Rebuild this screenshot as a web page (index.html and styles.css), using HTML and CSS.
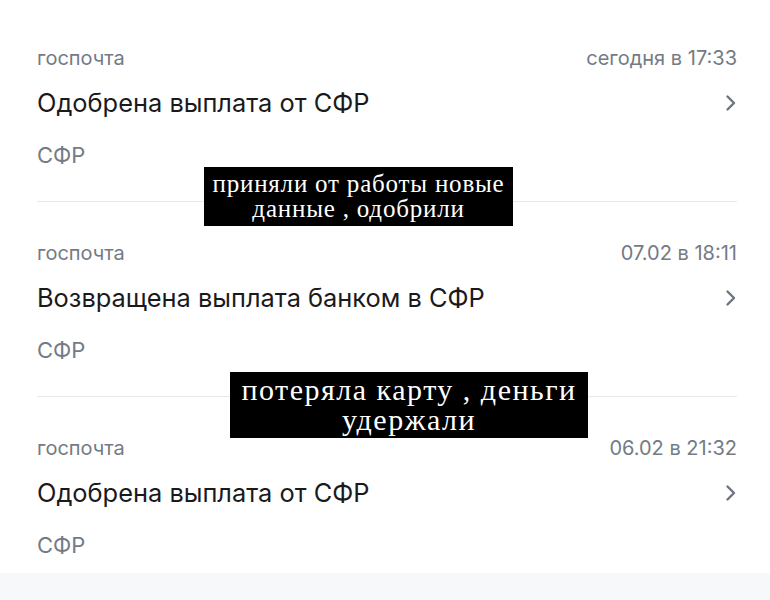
FILE: index.html
```html
<!DOCTYPE html>
<html lang="ru">
<head>
<meta charset="utf-8">
<link rel="stylesheet" href="styles.css">
</head>
<body>
<div class="page">
  <ul class="list">
    <li class="item">
      <div class="meta"><span>госпочта</span><span>сегодня в 17:33</span></div>
      <div class="title"><span>Одобрена выплата от СФР</span><svg class="chev" viewBox="0 0 12 18" width="12" height="18"><path d="M2.5 2.5 L9 9 L2.5 15.5" fill="none" stroke="currentColor" stroke-width="2.4" stroke-linecap="round" stroke-linejoin="round"/></svg></div>
      <div class="source">СФР</div>
    </li>
    <li class="item">
      <div class="meta"><span>госпочта</span><span>07.02 в 18:11</span></div>
      <div class="title"><span>Возвращена выплата банком в СФР</span><svg class="chev" viewBox="0 0 12 18" width="12" height="18"><path d="M2.5 2.5 L9 9 L2.5 15.5" fill="none" stroke="currentColor" stroke-width="2.4" stroke-linecap="round" stroke-linejoin="round"/></svg></div>
      <div class="source">СФР</div>
    </li>
    <li class="item last">
      <div class="meta"><span>госпочта</span><span>06.02 в 21:32</span></div>
      <div class="title"><span>Одобрена выплата от СФР</span><svg class="chev" viewBox="0 0 12 18" width="12" height="18"><path d="M2.5 2.5 L9 9 L2.5 15.5" fill="none" stroke="currentColor" stroke-width="2.4" stroke-linecap="round" stroke-linejoin="round"/></svg></div>
      <div class="source">СФР</div>
    </li>
  </ul>
  <div class="note note-1">приняли от работы новые<br>данные , одобрили</div>
  <div class="note note-2">потеряла карту , деньги<br>удержали</div>
</div>
</body>
</html>
```

FILE: styles.css
```css
html, body {
  margin: 0;
  padding: 0;
}
body {
  background: #f7f8fa;
  font-family: Inter, Roboto, "Noto Sans", sans-serif;
  min-height: 600px;
}
.page {
  position: relative;
  background: #ffffff;
}
.list {
  list-style: none;
  margin: 0;
  padding: 7px 33px 0 37px;
}
.item {
  padding: 39px 0 33px;
  border-bottom: 1px solid #e7e8ec;
}
.item.last {
  border-bottom: none;
  padding-bottom: 15px;
}
.meta {
  display: flex;
  justify-content: space-between;
  height: 24px;
  line-height: 24px;
  font-size: 20px;
  color: #737b86;
}
.title {
  display: flex;
  justify-content: space-between;
  align-items: center;
  margin-top: 17px;
  height: 32px;
  line-height: 32px;
  font-size: 25.4px;
  color: #1a1a1c;
}
.chev {
  color: #6d7480;
}
.source {
  margin-top: 23px;
  height: 26px;
  line-height: 26px;
  font-size: 22px;
  color: #737b86;
}
.note {
  position: absolute;
  background: #000000;
  color: #ffffff;
  font-family: "Liberation Serif", "DejaVu Serif", serif;
  text-align: center;
  box-sizing: border-box;
  white-space: nowrap;
}
.note-1 {
  left: 204px;
  top: 167px;
  width: 309px;
  height: 59px;
  font-size: 25px;
  line-height: 25px;
  letter-spacing: 0.8px;
  padding-top: 4px;
}
.note-2 {
  left: 230px;
  top: 372px;
  width: 358px;
  height: 66px;
  font-size: 30px;
  line-height: 30px;
  letter-spacing: 1.5px;
  padding-top: 3px;
}
```
